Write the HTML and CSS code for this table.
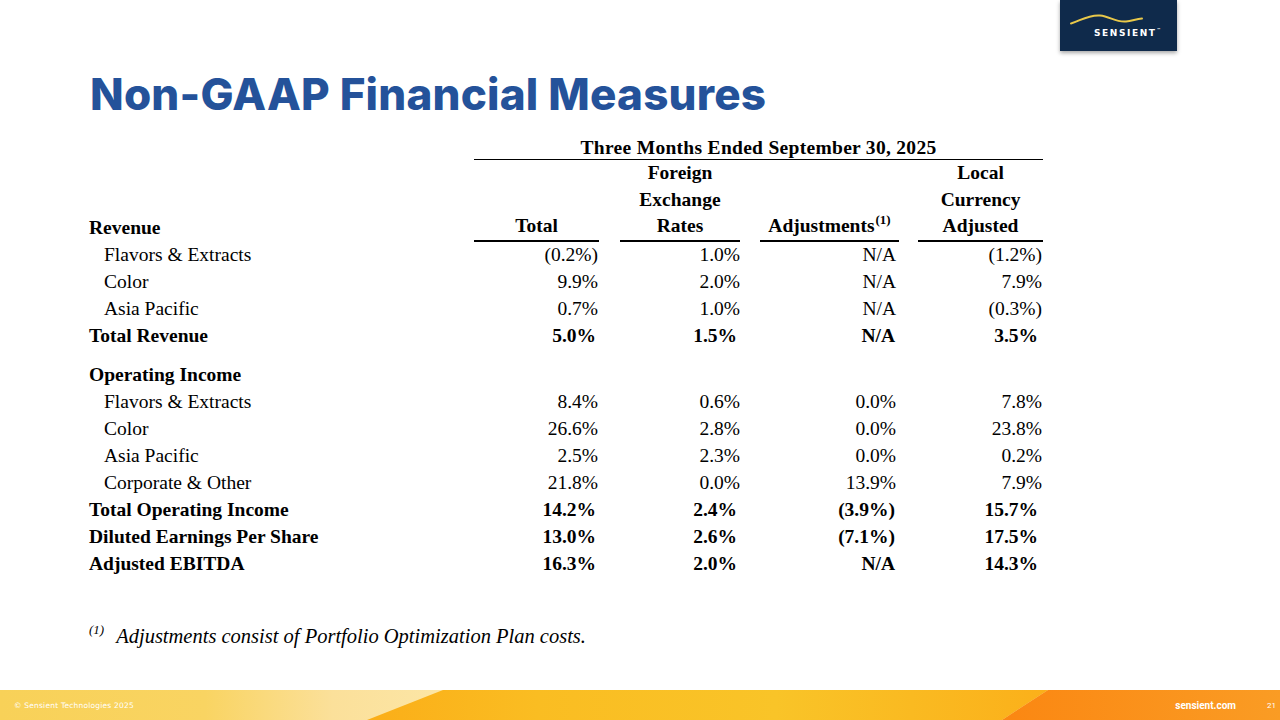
FILE: index.html
```html
<!DOCTYPE html>
<html lang="en">
<head>
<meta charset="utf-8">
<title>Non-GAAP Financial Measures</title>
<link rel="stylesheet" href="styles.css">
</head>
<body>
<div class="slide">
  <header class="topbar">
    <div class="logo">
      <svg class="logo-svg" width="117" height="51" viewBox="0 0 117 51">
        <path d="M11 23.5 C 20 21, 28 14.5, 40 15.5 C 50 16.5, 56 22.5, 66 21.5 C 72 21, 76 19, 82 18.5" fill="none" stroke="#e8c84a" stroke-width="2" stroke-linecap="round"/>
      </svg>
      <span class="logo-text">SENSIENT<sup>™</sup></span>
    </div>
  </header>
  <h1 class="title">Non-GAAP Financial Measures</h1>
  <table class="fin">
    <colgroup>
      <col class="w-lbl"><col class="w-c1"><col class="w-c2"><col class="w-c3"><col class="w-c4">
    </colgroup>
    <thead>
      <tr>
        <th class="lbl"></th>
        <th colspan="4" class="span"><div class="period">Three Months Ended September 30, 2025</div></th>
      </tr>
      <tr class="heads">
        <th class="lbl">Revenue</th>
        <th class="c1"><div class="hd">Total</div></th>
        <th class="c2"><div class="hd">Foreign<br>Exchange<br>Rates</div></th>
        <th class="c3"><div class="hd">Adjustments<sup>(1)</sup></div></th>
        <th class="c4"><div class="hd">Local<br>Currency<br>Adjusted</div></th>
      </tr>
    </thead>
    <tbody>
      <tr class="first"><td class="lbl sub">Flavors &amp; Extracts</td><td class="c1">(0.2%)</td><td class="c2">1.0%</td><td class="c3">N/A</td><td class="c4">(1.2%)</td></tr>
      <tr><td class="lbl sub">Color</td><td class="c1">9.9%</td><td class="c2">2.0%</td><td class="c3">N/A</td><td class="c4">7.9%</td></tr>
      <tr><td class="lbl sub">Asia Pacific</td><td class="c1">0.7%</td><td class="c2">1.0%</td><td class="c3">N/A</td><td class="c4">(0.3%)</td></tr>
      <tr class="bold"><td class="lbl">Total Revenue</td><td class="c1">5.0%</td><td class="c2">1.5%</td><td class="c3">N/A</td><td class="c4">3.5%</td></tr>
      <tr class="bold section"><td class="lbl">Operating Income</td><td class="c1"></td><td class="c2"></td><td class="c3"></td><td class="c4"></td></tr>
      <tr><td class="lbl sub">Flavors &amp; Extracts</td><td class="c1">8.4%</td><td class="c2">0.6%</td><td class="c3">0.0%</td><td class="c4">7.8%</td></tr>
      <tr><td class="lbl sub">Color</td><td class="c1">26.6%</td><td class="c2">2.8%</td><td class="c3">0.0%</td><td class="c4">23.8%</td></tr>
      <tr><td class="lbl sub">Asia Pacific</td><td class="c1">2.5%</td><td class="c2">2.3%</td><td class="c3">0.0%</td><td class="c4">0.2%</td></tr>
      <tr><td class="lbl sub">Corporate &amp; Other</td><td class="c1">21.8%</td><td class="c2">0.0%</td><td class="c3">13.9%</td><td class="c4">7.9%</td></tr>
      <tr class="bold"><td class="lbl">Total Operating Income</td><td class="c1">14.2%</td><td class="c2">2.4%</td><td class="c3">(3.9%)</td><td class="c4">15.7%</td></tr>
      <tr class="bold"><td class="lbl">Diluted Earnings Per Share</td><td class="c1">13.0%</td><td class="c2">2.6%</td><td class="c3">(7.1%)</td><td class="c4">17.5%</td></tr>
      <tr class="bold"><td class="lbl">Adjusted EBITDA</td><td class="c1">16.3%</td><td class="c2">2.0%</td><td class="c3">N/A</td><td class="c4">14.3%</td></tr>
    </tbody>
  </table>
  <p class="footnote"><sup>(1)</sup><em>Adjustments consist of Portfolio Optimization Plan costs.</em></p>
  <div class="spacer"></div>
  <footer class="footer">
    <svg class="footer-bg" width="1280" height="30" viewBox="0 0 1280 30" preserveAspectRatio="none">
      <defs>
        <linearGradient id="gPale" x1="0" y1="0" x2="1280" y2="0" gradientUnits="userSpaceOnUse">
          <stop offset="0" stop-color="#f8d158"/>
          <stop offset="0.16" stop-color="#f9d462"/>
          <stop offset="0.26" stop-color="#fbe09a"/>
          <stop offset="0.35" stop-color="#fce6a6"/>
        </linearGradient>
        <linearGradient id="gYellow" x1="367" y1="0" x2="1048" y2="0" gradientUnits="userSpaceOnUse">
          <stop offset="0" stop-color="#fbae18"/>
          <stop offset="0.25" stop-color="#fabd22"/>
          <stop offset="0.6" stop-color="#f9c428"/>
          <stop offset="1" stop-color="#fbb01a"/>
        </linearGradient>
        <linearGradient id="gOrange" x1="1002" y1="0" x2="1280" y2="0" gradientUnits="userSpaceOnUse">
          <stop offset="0" stop-color="#fb8712"/>
          <stop offset="1" stop-color="#fa9c24"/>
        </linearGradient>
      </defs>
      <rect x="0" y="0" width="1280" height="30" fill="url(#gPale)"/>
      <polygon points="443,0 1048,0 1002,30 367,30" fill="url(#gYellow)"/>
      <polygon points="1048,0 1280,0 1280,30 1002,30" fill="url(#gOrange)"/>
    </svg>
    <span class="copy">© Sensient Technologies 2025</span>
    <span class="foot-right"><span class="site">sensient.com</span><span class="page">21</span></span>
  </footer>
</div>
</body>
</html>
```
FILE: styles.css
```css
html, body {
  margin: 0;
  padding: 0;
  background: #ffffff;
}
.slide {
  width: 1280px;
  height: 720px;
  display: flex;
  flex-direction: column;
  overflow: hidden;
  position: relative;
}
.topbar {
  display: flex;
  justify-content: flex-end;
  padding-right: 103px;
  height: 51px;
  flex: none;
}
.logo {
  width: 117px;
  height: 51px;
  background: #0f2a4b;
  box-shadow: 0 2px 4px rgba(0,0,0,0.35);
  position: relative;
}
.logo-svg {
  position: absolute;
  left: 0;
  top: 0;
}
.logo-text {
  position: absolute;
  left: 34px;
  top: 24px;
  font-family: "DejaVu Sans", sans-serif;
  font-weight: 700;
  font-size: 9px;
  letter-spacing: 1.6px;
  color: #ffffff;
  line-height: 11px;
}
.logo-text sup {
  font-size: 4px;
  letter-spacing: 0;
  vertical-align: 5px;
}
.title {
  margin: 16px 0 0 90px;
  font-family: "Inter", sans-serif;
  font-weight: 800;
  font-size: 44px;
  line-height: 54px;
  color: #24529a;
  letter-spacing: 0.2px;
}
.fin {
  margin: 16px 0 0 89px;
  width: 954px;
  table-layout: fixed;
  border-collapse: collapse;
  font-family: "Liberation Serif", serif;
  font-size: 19.5px;
  color: #000;
}
.w-lbl { width: 385px; }
.w-c1 { width: 125px; }
.w-c2 { width: 141px; }
.w-c3 { width: 159px; }
.w-c4 { width: 144px; }
.fin th, .fin td {
  padding: 0;
  line-height: 27px;
  vertical-align: bottom;
  white-space: nowrap;
}
.fin th {
  font-weight: 700;
}
.fin .lbl {
  text-align: left;
}
.fin .lbl.sub {
  padding-left: 15px;
}
.fin .c1, .fin .c2, .fin .c3, .fin .c4 {
  text-align: right;
}
.fin .c2 { padding-left: 21px; }
.fin .c3 { padding-left: 20px; }
.fin .c4 { padding-left: 19px; }
.fin td.c1 { padding-right: 1px; }
.fin td.c2 { padding-right: 0; }
.fin td.c3 { padding-right: 3px; }
.fin td.c4 { padding-right: 1px; }
.fin tr.bold td { font-weight: 700; }
.fin tr.bold td.c1 { padding-right: 3px; }
.fin tr.bold td.c2 { padding-right: 3px; }
.fin tr.bold td.c3 { padding-right: 4px; }
.fin tr.bold td.c4 { padding-right: 5px; }
.fin th.span {
  text-align: center;
}
.period {
  border-bottom: 1.5px solid #000;
  line-height: 22px;
  letter-spacing: 0.3px;
}
.heads th {
  line-height: 26.5px;
}
.hd {
  text-align: center;
  border-bottom: 2px solid #000;
}
.hd sup {
  font-size: 13px;
  vertical-align: 8px;
  line-height: 0;
  margin-left: 1px;
}
.fin tr.first td {
  line-height: 26px;
}
.fin tr.section td {
  padding-top: 12px;
}
.footnote {
  margin: 48px 0 0 89px;
  font-family: "Liberation Serif", serif;
  font-size: 20.5px;
  color: #000;
}
.footnote sup {
  font-size: 13px;
  font-style: italic;
  vertical-align: 9px;
  line-height: 0;
  margin-right: 12px;
}
.footnote em {
  font-style: italic;
}
.spacer {
  flex: 1;
}
.footer {
  height: 30px;
  flex: none;
  position: relative;
  display: flex;
  align-items: center;
  justify-content: space-between;
  padding: 0 4px 0 14px;
}
.footer-bg {
  position: absolute;
  left: 0;
  top: 0;
  z-index: 0;
}
.copy, .foot-right {
  position: relative;
  z-index: 1;
}
.copy {
  font-family: "DejaVu Sans", sans-serif;
  font-size: 7.5px;
  color: #ffffff;
  letter-spacing: 0.2px;
}
.foot-right {
  display: flex;
  align-items: center;
  gap: 31px;
}
.site {
  font-family: "Roboto", sans-serif;
  font-weight: 700;
  font-size: 10px;
  color: #ffffff;
}
.page {
  font-family: "Roboto", sans-serif;
  font-size: 8px;
  color: #ffffff;
}
```
